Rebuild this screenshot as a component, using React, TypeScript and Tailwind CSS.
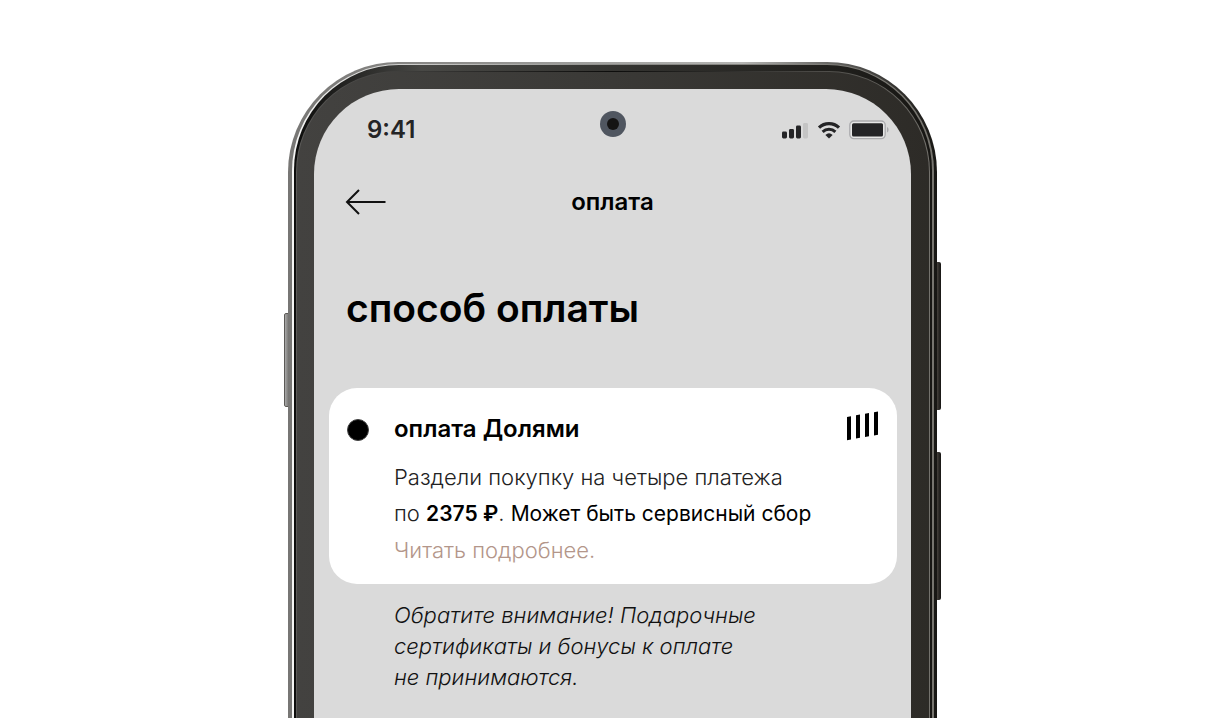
function SignalIcon() {
  return (
    <svg width="28" height="18" viewBox="0 0 28 18" aria-hidden="true">
      <rect x="1" y="10.5" width="5" height="7" rx="1.4" fill="#242426" />
      <rect x="8" y="8" width="5" height="9.5" rx="1.4" fill="#242426" />
      <rect x="15" y="4.5" width="5" height="13" rx="1.4" fill="#242426" />
      <rect x="22" y="2" width="5" height="15.5" rx="1.4" fill="#c4c4c4" />
    </svg>
  );
}

function WifiIcon() {
  return (
    <svg width="24" height="18" viewBox="0 0 24 18" fill="none" aria-hidden="true">
      <path d="M2 6.6C7.600 1.200 16.400 1.200 22 6.600" stroke="#242426" strokeWidth="3.2" />
      <path d="M5.600 10.900C9.200 7.500 14.800 7.500 18.400 10.900" stroke="#242426" strokeWidth="3" />
      <path d="M8.400 13.900Q12 10.700 15.600 13.900L12 17.500Z" fill="#242426" />
    </svg>
  );
}

function BatteryIcon() {
  return (
    <svg width="40" height="20" viewBox="0 0 40 20" fill="none" aria-hidden="true">
      <rect x="0.8" y="1" width="35.4" height="17.6" rx="4" fill="#e6e6e6" stroke="#aaaaad" strokeWidth="1.3" />
      <rect x="3" y="3.2" width="31" height="13.2" rx="1.5" fill="#242426" />
      <path d="M38 7v5.5q1.6-.8 1.6-2.75T38 7Z" fill="#aaaaad" />
    </svg>
  );
}

function BackArrow() {
  return (
    <svg width="42" height="28" viewBox="0 0 42 28" fill="none" stroke="#111" strokeWidth="2" aria-hidden="true">
      <path d="M14 2 2 14l12 12M2 14h38.500" />
    </svg>
  );
}

function DolyamiLogo() {
  return (
    <svg width="32" height="30" viewBox="0 0 32 30" fill="#000" role="img" aria-label="Долями">
      <path d="M0 6l4-.7v23.200l-4 .7ZM9 4.300l4-.7v23.200l-4 .7ZM18 2.800l4-.7v23.200l-4 .7ZM27 1.200l4-.7v23.200l-4 .7Z" />
    </svg>
  );
}

function StatusBar() {
  return (
    <div className="flex items-center justify-between pt-[23px] pr-[22px] pl-[53px]">
      <span className="text-2xl leading-9 font-semibold text-[#242426]">9:41</span>
      <span className="flex items-center gap-2">
        <SignalIcon />
        <WifiIcon />
        <BatteryIcon />
      </span>
    </div>
  );
}

function PaymentCard() {
  return (
    <label className="mr-[14px] ml-[15px] mt-[54px] flex rounded-[28px] bg-white pt-[23px] pr-[18px] pb-4 pl-[18px]">
      <input
        type="radio"
        name="method"
        defaultChecked
        className="mt-2 size-[22px] shrink-0 appearance-none rounded-full border border-[#444] bg-black"
      />
      <span className="ml-[25px] flex-1 text-[22px] leading-9 font-light text-[#222]">
        <span className="flex justify-between">
          <span className="text-2xl leading-9 font-semibold text-black">оплата Долями</span>
          <DolyamiLogo />
        </span>
        <span className="mt-3 block">Раздели покупку на четыре платежа</span>
        <span className="block whitespace-nowrap">
          по <b className="text-[21px] font-semibold text-black">2375 ₽</b>.{" "}
          <span className="text-[21px] font-normal text-black">Может быть сервисный сбор</span>
        </span>
        <a href="#details" className="block text-[#b3968a]">Читать подробнее.</a>
      </span>
    </label>
  );
}

export default function App() {
  return (
    <main className="flex h-screen justify-center overflow-hidden bg-white pr-[3px] pb-[2px] font-[Inter,'Liberation_Sans',sans-serif]">
      <div className="relative mt-[62px] w-full max-w-[649px]">
        <div className="absolute top-[251px] -left-1 h-[94px] w-2 rounded-l-[2px] border border-[#5c5a57] bg-linear-to-r from-[#aaa] to-[#55534f]" />
        <div className="absolute top-[200px] -right-1 h-[148px] w-2 rounded-r-[2px] bg-linear-to-r from-[#45413c] via-[#45413c] to-[#151412]" />
        <div className="absolute top-[390px] -right-1 h-[148px] w-2 rounded-r-[2px] bg-linear-to-r from-[#45413c] via-[#45413c] to-[#151412]" />

        <div className="relative h-full rounded-t-[110px] bg-linear-to-r from-[#777674] via-[#b5b5b3] via-70% to-[#171613] pt-[2px] pr-[3px] pl-1">
          <div className="h-full rounded-t-[107px] bg-linear-to-r from-[#f6f6f5] via-[#8c8c89] to-[#77756f] pt-px pr-[2px] pl-[2px]">
            <div className="h-full rounded-t-[105px] bg-linear-to-r from-[#0d0d0c] via-[#484845] via-20% to-[#171613] pt-[6px] pr-[2px] pl-[2px]">
              <div className="h-full rounded-t-[101px] bg-linear-to-r from-[#5a5957] via-[#0d0d0c] to-[#74726d] pt-px pr-px pl-px">
                <div className="h-full rounded-t-[100px] bg-linear-to-r from-[#434240] via-[#3a3936] to-[#2d2b27] pt-[17px] pr-[18px] pl-[17px]">
                  <div className="relative h-full overflow-hidden rounded-t-[85px] bg-[#dadada]">
                    <span className="absolute top-[22px] left-1/2 flex size-[26px] -translate-x-1/2 items-center justify-center rounded-full bg-[#505660]">
                      <span className="size-3 rounded-full bg-[#151414]" />
                    </span>
                    <StatusBar />
                    <header className="mt-9 grid grid-cols-[1fr_auto_1fr] items-center px-[31px]">
                      <button type="button" aria-label="Назад" className="justify-self-start">
                        <BackArrow />
                      </button>
                      <span className="text-2xl leading-9 font-semibold text-black">оплата</span>
                    </header>
                    <h1 className="mt-[62px] ml-8 text-[39px] leading-[52px] font-semibold text-black">способ оплаты</h1>
                    <PaymentCard />
                    <p className="mt-4 ml-20 text-[22px] leading-[31px] font-light text-[#111] italic">
                      Обратите внимание! Подарочные
                      <br />
                      сертификаты и бонусы к оплате
                      <br />
                      не принимаются.
                    </p>
                  </div>
                </div>
              </div>
            </div>
          </div>
        </div>
      </div>
    </main>
  );
}
